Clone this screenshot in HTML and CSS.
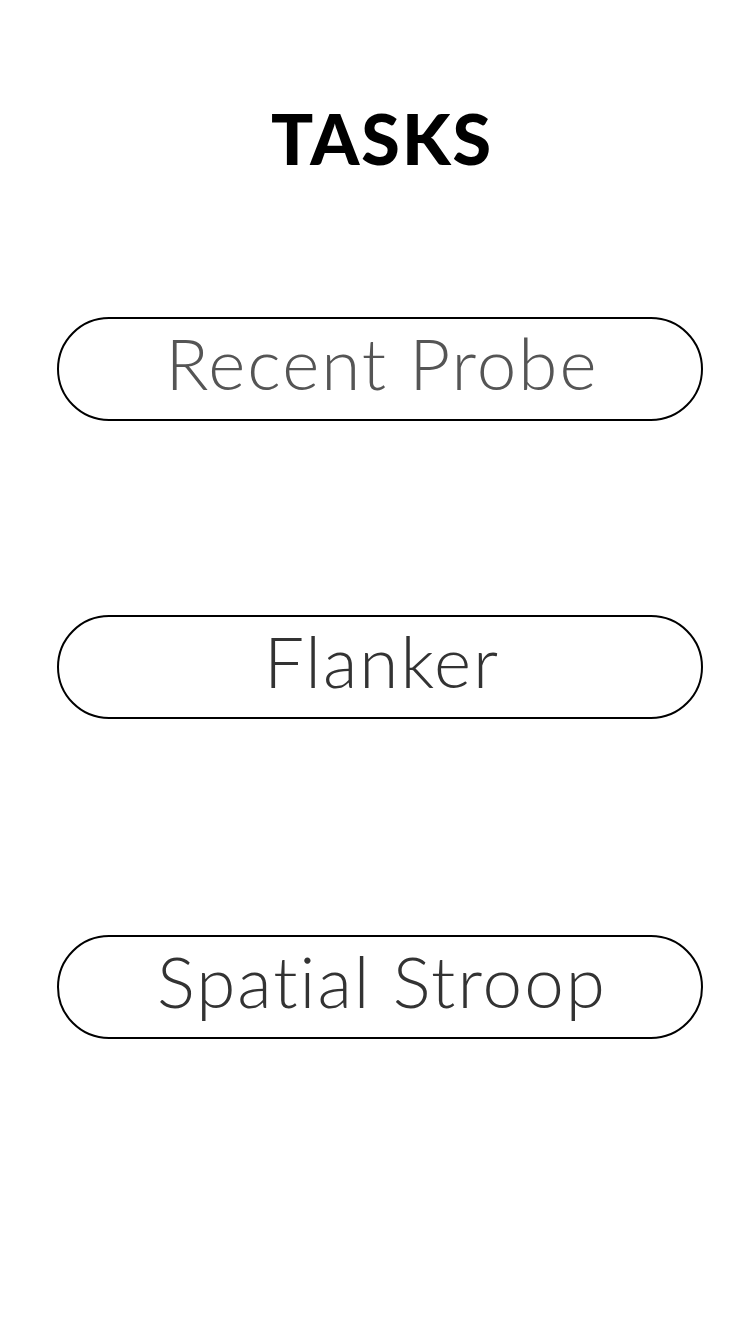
FILE: index.html
```html
<!DOCTYPE html>
<html>
<head>
<meta charset="utf-8">
<link rel="stylesheet" href="styles.css">
</head>
<body>
<main class="screen">
  <h1 class="title">TASKS</h1>
  <div class="tasks">
    <button class="task task-probe">Recent Probe</button>
    <button class="task task-flanker">Flanker</button>
    <button class="task task-stroop">Spatial Stroop</button>
  </div>
</main>
</body>
</html>
```
FILE: styles.css
```css
html, body {
  margin: 0;
  padding: 0;
  background: #fff;
}
.screen {
  box-sizing: border-box;
  width: 750px;
  height: 1334px;
  padding-left: 10px;
  display: flex;
  flex-direction: column;
  align-items: center;
  font-family: "Lato", "Liberation Sans", sans-serif;
}
.title {
  margin: 99px 0 0 4px;
  height: 78px;
  line-height: 78px;
  font-size: 70px;
  font-weight: 900;
  letter-spacing: 2px;
  color: #000;
}
.tasks {
  display: flex;
  flex-direction: column;
  margin-top: 140px;
  width: 646px;
}
.task {
  box-sizing: border-box;
  width: 646px;
  height: 104px;
  border: 2px solid #000;
  border-radius: 52px;
  background: #fff;
  font-family: "Lato", "Liberation Sans", sans-serif;
  font-weight: 300;
  font-size: 71px;
  letter-spacing: 2px;
  font-variant-ligatures: none;
  line-height: 1;
  padding: 0 0 14px 4px;
  display: flex;
  align-items: center;
  justify-content: center;
  color: #333;
}
.task-probe { color: #555; }
.task-flanker { margin-top: 194px; }
.task-stroop { margin-top: 216px; }
```
